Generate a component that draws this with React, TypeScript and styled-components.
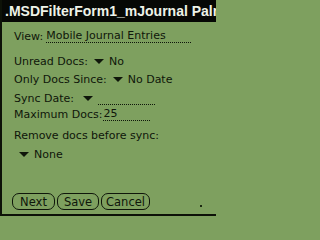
import React from "react";
import styled, { createGlobalStyle } from "styled-components";

const Global = createGlobalStyle`
  html, body { margin: 0; padding: 0; background: #7ea05f; }
  #root { width: 216px; height: 216px; }
`;

const Screen = styled.div`
  width: 216px;
  height: 216px;
  box-sizing: border-box;
  background: #7ea05f;
  border-left: 2px solid #0d1208;
  border-bottom: 2px solid #0d1208;
  display: flex;
  flex-direction: column;
  overflow: hidden;
  font-family: "DejaVu Sans", sans-serif;
  font-size: 11px;
  color: #0f160a;
`;

const TitleBar = styled.div`
  height: 22px;
  flex: none;
  background: #060805;
  color: #eef3e8;
  font-family: "Liberation Sans", sans-serif;
  font-weight: bold;
  font-size: 14px;
  letter-spacing: 0;
  line-height: 23px;
  white-space: nowrap;
  overflow: hidden;
  margin-left: -2px;
  padding-left: 5px;
`;

const Form = styled.div`
  display: flex;
  flex-direction: column;
  padding-left: 12px;
  flex: 1;
`;

const Row = styled.div<{ $top: number }>`
  display: flex;
  align-items: center;
  height: 16px;
  margin-top: ${(p) => p.$top}px;
  white-space: nowrap;
`;

const Label = styled.span``;

const Trigger = styled.span<{ $left: number }>`
  display: inline-flex;
  align-items: center;
  margin-left: ${(p) => p.$left}px;
`;

const Arrow = styled.span`
  width: 0;
  height: 0;
  border-left: 5px solid transparent;
  border-right: 5px solid transparent;
  border-top: 5px solid #0f160a;
  margin-right: 5px;
`;

const Field = styled.span<{ $left: number; $width: number }>`
  display: inline-block;
  margin-left: ${(p) => p.$left}px;
  width: ${(p) => p.$width}px;
  height: 16px;
  line-height: 15px;
  background-image: linear-gradient(to right, #0f160a 50%, transparent 50%);
  background-size: 2px 1px;
  background-repeat: repeat-x;
  background-position: 0 14px;
`;

const ButtonBar = styled.div`
  display: flex;
  gap: 2px;
  margin-top: auto;
  margin-bottom: 4px;
  margin-left: -2px;
  align-items: center;
`;

const Button = styled.button<{ $width: number }>`
  width: ${(p) => p.$width}px;
  height: 17px;
  box-sizing: border-box;
  border: 1.5px solid #0f160a;
  border-radius: 7px;
  background: transparent;
  font-family: "DejaVu Sans", sans-serif;
  font-size: 11.5px;
  color: #0f160a;
  padding: 0;
  line-height: 14px;
`;

const Dot = styled.span`
  width: 2px;
  height: 2px;
  background: #1c2a12;
  margin-left: 48px;
  margin-top: 8px;
`;

export default function App() {
  return (
    <>
      <Global />
      <Screen>
        <TitleBar>.MSDFilterForm1_mJournal Palm</TitleBar>
        <Form>
          <Row $top={6}>
            <Label>View:</Label>
            <Field $left={3} $width={146}>Mobile Journal Entries</Field>
          </Row>
          <Row $top={9}>
            <Label>Unread Docs:</Label>
            <Trigger $left={6}><Arrow />No</Trigger>
          </Row>
          <Row $top={2}>
            <Label>Only Docs Since:</Label>
            <Trigger $left={6}><Arrow />No Date</Trigger>
          </Row>
          <Row $top={3}>
            <Label>Sync Date:</Label>
            <Trigger $left={9}><Arrow /></Trigger>
            <Field $left={0} $width={57}></Field>
          </Row>
          <Row $top={0}>
            <Label>Maximum Docs:</Label>
            <Field $left={1} $width={48}>25</Field>
          </Row>
          <Row $top={5}>
            <Label>Remove docs before sync:</Label>
          </Row>
          <Row $top={3}>
            <Trigger $left={5}><Arrow />None</Trigger>
          </Row>
          <ButtonBar>
            <Button $width={43}>Next</Button>
            <Button $width={42}>Save</Button>
            <Button $width={49}>Cancel</Button>
            <Dot />
          </ButtonBar>
        </Form>
      </Screen>
    </>
  );
}
